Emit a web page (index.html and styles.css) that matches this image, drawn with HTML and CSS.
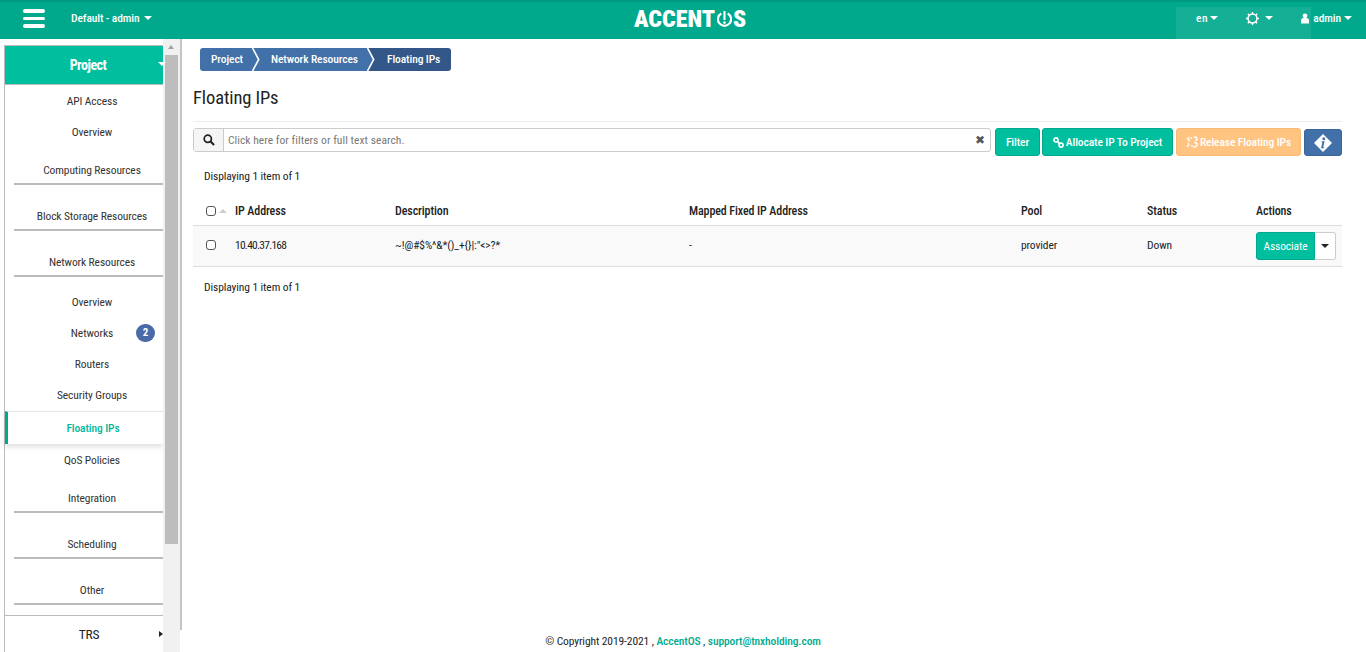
FILE: index.html
```html
<!DOCTYPE html>
<html lang="en">
<head>
<meta charset="utf-8">
<title>Floating IPs</title>
<link rel="stylesheet" href="styles.css">
</head>
<body>
<header class="topbar">
  <div class="hamburger"><span></span><span></span><span></span></div>
  <div class="project-switch">Default - admin<i class="caret"></i></div>
  <div class="logo">ACCENT<svg class="logo-o" viewBox="0 0 16 18" width="15" height="17"><path d="M4.6 2.6A7 7 0 1 0 11.4 2.6" fill="none" stroke="#fff" stroke-width="2.3"/><rect x="6.9" y="0" width="2.2" height="9.5" fill="#fff"/><circle cx="8" cy="12.3" r="1.4" fill="#fff"/></svg>S</div>
  <div class="patch"></div>
  <nav class="topnav">
    <div class="lang">en<i class="caret"></i></div>
    <div class="theme">
      <svg viewBox="0 0 14 14" width="13" height="13"><circle cx="7" cy="7" r="4.8" fill="none" stroke="#fff" stroke-width="1.6"/><path d="M7 0v2.4M7 11.6V14M0 7h2.4M11.6 7H14M2 2l1.7 1.7M10.3 10.3L12 12M12 2l-1.7 1.7M3.7 10.3L2 12" stroke="#fff" stroke-width="1.5"/></svg>
      <i class="caret"></i>
    </div>
    <div class="user">
      <svg viewBox="0 0 9 12" width="8" height="11"><circle cx="4.5" cy="3" r="2.7" fill="#fff"/><path d="M0 11.5V8.2C0 6.6 1.2 5.6 2.4 5.4h4.2C7.8 5.6 9 6.6 9 8.2v3.3z" fill="#fff"/></svg>
      <span>admin</span><i class="caret"></i>
    </div>
  </nav>
</header>
<div class="layout">
  <aside class="sidebar">
    <div class="panel">
      <div class="panel-head">Project<i class="caret head-caret"></i></div>
      <ul class="menu">
        <li class="item item-api">API Access</li>
        <li class="item item-short">Overview</li>
        <li class="group group-first">Computing Resources</li>
        <li class="group">Block Storage Resources</li>
        <li class="group">Network Resources</li>
        <li class="item item-sub">Overview</li>
        <li class="item item-short item-badge">Networks<span class="badge">2</span></li>
        <li class="item item-short">Routers</li>
        <li class="item item-short">Security Groups</li>
        <li class="item active">Floating IPs</li>
        <li class="item item-api">QoS Policies</li>
        <li class="group group-first">Integration</li>
        <li class="group">Scheduling</li>
        <li class="group">Other</li>
      </ul>
      <div class="panel-foot">TRS<i class="foot-caret"></i></div>
    </div>
    <div class="scrollbar">
      <i class="scroll-up"></i>
      <div class="thumb"></div>
    </div>
    <div class="rail"></div>
  </aside>
  <main class="content">
    <ol class="crumbs">
      <li class="crumb">Project</li>
      <li class="sep"><svg viewBox="0 0 8 23" width="8" height="23"><path d="M0 0h1l6 11.5L1 23H0z" fill="#4270a8"/><path d="M0.5 0l6.2 11.5L0.5 23" fill="none" stroke="#fff" stroke-width="1.6"/></svg></li>
      <li class="crumb crumb-mid">Network Resources</li>
      <li class="sep sep-dark"><svg viewBox="0 0 8 23" width="8" height="23"><path d="M0 0h1l6 11.5L1 23H0z" fill="#4270a8"/><path d="M0.5 0l6.2 11.5L0.5 23" fill="none" stroke="#fff" stroke-width="1.6"/></svg></li>
      <li class="crumb crumb-last">Floating IPs</li>
    </ol>
    <h1 class="title">Floating IPs</h1>
    <div class="toolbar">
      <div class="search">
        <span class="search-addon"><svg viewBox="0 0 13 13" width="12" height="12"><circle cx="5.2" cy="5.2" r="3.9" fill="none" stroke="#222" stroke-width="1.9"/><path d="M8.2 8.2l3.8 3.8" stroke="#222" stroke-width="2.2"/></svg></span>
        <span class="search-input">Click here for filters or full text search.</span>
        <span class="search-clear">✖</span>
      </div>
      <button class="btn btn-green btn-filter">Filter</button>
      <button class="btn btn-green btn-alloc"><svg viewBox="0 0 12 12" width="11" height="11"><circle cx="3.2" cy="3.2" r="2.2" fill="none" stroke="#fff" stroke-width="1.8"/><circle cx="8.8" cy="8.8" r="2.2" fill="none" stroke="#fff" stroke-width="1.8"/><path d="M4.8 4.8l2.4 2.4" stroke="#fff" stroke-width="1.8"/></svg>Allocate IP To Project</button>
      <button class="btn btn-orange"><svg viewBox="0 0 14 13" width="12" height="12"><path d="M1 3.5L3.5 1M4.5 3.5l-2 2.5M2 8l2 2.5M1 10.5l2 1.5M9 1h3l1 2.5-2 2M9.5 7l3 1 .5 2.5-2 1.5H8.5M6 1v2M7 10v2" fill="none" stroke="#fff" stroke-width="1.6"/></svg>Release Floating IPs</button>
      <button class="btn btn-info"><svg viewBox="0 0 20 20" width="20" height="20"><path d="M10 1l9 9-9 9-9-9z" fill="#fff"/><circle cx="10.8" cy="5.7" r="1.5" fill="#4270a8"/><path d="M8.6 8.2h3l-1.4 6h1v1H8l1.4-6h-1z" fill="#4270a8"/></svg></button>
    </div>
    <p class="count count-top">Displaying 1 item of 1</p>
    <div class="table">
      <div class="row row-head">
        <span class="cell-check"><i class="check"></i><i class="sort"></i></span>
        <span>IP Address</span><span>Description</span><span>Mapped Fixed IP Address</span><span>Pool</span><span>Status</span><span>Actions</span>
      </div>
      <div class="row row-body">
        <span class="cell-check"><i class="check"></i></span>
        <span class="ip">10.40.37.168</span><span>~!@#$%^&amp;*()_+{}|:"&lt;&gt;?*</span><span>-</span><span>provider</span><span>Down</span>
        <span class="actions"><button class="btn-assoc">Associate</button><button class="btn-more"><i class="caret caret-dark"></i></button></span>
      </div>
    </div>
    <p class="count count-bottom">Displaying 1 item of 1</p>
    <footer class="footer">© Copyright 2019-2021 , <a>AccentOS</a> , <a>support@tnxholding.com</a></footer>
  </main>
</div>
</body>
</html>
```
FILE: styles.css
```css
* { box-sizing: border-box; }
html, body { margin: 0; height: 652px; overflow: hidden; background: #fff; }
body { font-family: "Roboto", sans-serif; font-stretch: 75%; font-size: 11.5px; letter-spacing: -.1px; color: #222; white-space: nowrap; }
ul, ol { list-style: none; margin: 0; padding: 0; }
i { display: block; font-style: normal; }

.caret { width: 0; height: 0; border-left: 4px solid transparent; border-right: 4px solid transparent; border-top: 4px solid #fff; }
.caret-dark { border-top-color: #222; }

.topbar { position: relative; display: flex; align-items: center; height: 39px; background: #00a98c; border-top: 2px solid #009a80; color: #fff; }
.hamburger { display: flex; flex-direction: column; gap: 4px; width: 22px; margin: -4px 0 0 23px; }
.hamburger span { display: block; height: 3.5px; background: #fff; border-radius: 2px; }
.project-switch { display: flex; align-items: center; gap: 4px; margin: -5px 0 0 26px; font-weight: 500; }
.logo { position: absolute; left: 634px; top: 8px; display: flex; align-items: center; height: 18px; font-weight: 900; font-size: 24px; letter-spacing: 0; line-height: 18px; color: #fff; }
.logo-o { margin: 0 1px 0 2px; }
.patch { position: absolute; left: 1176px; top: 5px; width: 135px; height: 32px; background: rgba(255,255,255,.08); }
.topnav { position: relative; display: flex; align-items: center; margin: -5px 14px 0 auto; font-weight: 500; }
.lang, .theme, .user { display: flex; align-items: center; }
.lang { gap: 2px; letter-spacing: .6px; }
.theme { gap: 6px; margin-left: 28px; }
.user { margin-left: 28px; gap: 4px; }
.user .caret { margin-left: -1px; }

.layout { display: flex; height: 613px; }
.sidebar { display: flex; flex: none; width: 178px; margin-left: 4px; }
.panel { display: flex; flex: none; flex-direction: column; width: 159px; height: 607px; margin-top: 6px; border-left: 1px solid #bbb; border-top: 1px solid #bbb; }
.panel-head { position: relative; display: flex; flex: none; align-items: center; justify-content: center; height: 39px; padding-left: 8px; padding-bottom: 1px; background: #00bf9f; border-bottom: 1px solid #bbb; color: #fff; font-size: 14px; letter-spacing: -.5px; font-weight: 700; }
.head-caret { position: absolute; right: -3px; top: 16px; z-index: 2; }
.menu { flex: none; }
.item { display: flex; align-items: center; justify-content: center; padding-left: 16px; color: #333; text-align: center; }
.item-api { height: 32px; }
.item-short { height: 31px; padding-bottom: 1px; }
.item-sub { height: 41px; padding-top: 9px; }
.item-badge { position: relative; }
.group { height: 46px; margin-left: 9px; padding-top: 18px; padding-left: 7px; line-height: 27px; border-bottom: 2px solid #bbb; text-align: center; color: #333; }
.group-first { height: 37px; padding-top: 9px; }
.badge { position: absolute; right: 8px; top: 6px; width: 19px; height: 18px; border-radius: 9px; background: #4a6aa8; color: #fff; font-size: 11px; font-weight: 700; line-height: 18px; text-align: center; }
.active { height: 33px; border-top: 1px solid #e4e4e4; border-left: 3px solid #00a98c; color: #00b89c; font-weight: 500; box-shadow: 0 3px 5px rgba(0,0,0,.12); padding-left: 15px; }
.panel-foot { position: relative; display: flex; flex: none; align-items: center; justify-content: center; height: 37px; margin-top: 10px; padding-left: 10px; border-top: 1px solid #bbb; font-size: 13.5px; letter-spacing: -.3px; }
.foot-caret { position: absolute; right: 0; top: 15px; width: 0; height: 0; border-top: 3.5px solid transparent; border-bottom: 3.5px solid transparent; border-left: 4px solid #222; }

.scrollbar { position: relative; flex: none; width: 17px; background: #f1f1f1; padding: 16px 2px 0; }
.scroll-up { position: absolute; left: 5px; top: 6px; width: 0; height: 0; border-left: 3.5px solid transparent; border-right: 3.5px solid transparent; border-bottom: 4px solid #a3a3a3; }
.thumb { width: 13px; height: 489px; background: #bdbdbd; }
.rail { flex: none; width: 2px; height: 591px; background: #c4c4c4; }

.content { position: relative; flex: 1; min-width: 0; padding: 9px 24px 0 11px; }
.crumbs { display: flex; height: 23px; margin-left: 7px; color: #fff; font-weight: 500; line-height: 23px; }
.crumb { padding: 0 0 0 11px; width: 52px; background: #4270a8; border-radius: 3px 0 0 3px; }
.crumb-mid { width: 107px; border-radius: 0; padding-left: 11px; }
.crumb-last { width: 76px; background: #34578a; border-radius: 0 3px 3px 0; padding-left: 12px; }
.sep { width: 8px; height: 23px; background: #4270a8; }
.sep svg { display: block; }
.sep-dark { background: #34578a; }
.title { margin: 16px 0 0; font-size: 18.5px; font-weight: 400; line-height: 22px; padding-bottom: 12px; border-bottom: 1px solid #eee; color: #222; }
.toolbar { display: flex; align-items: flex-start; margin-top: 6px; gap: 2px; }
.search { display: flex; width: 798px; height: 24px; margin-right: 2px; border: 1px solid #ccc; border-radius: 3px; background: #fff; align-items: center; }
.search-addon { display: flex; flex: none; align-items: center; justify-content: center; width: 30px; height: 22px; background: #f5f5f5; border-right: 1px solid #ccc; }
.search-input { flex: 1; padding-left: 4px; color: #777; letter-spacing: .05px; }
.search-clear { width: 21px; color: #555; font-size: 12px; text-align: center; }
.btn { display: flex; align-items: center; justify-content: center; height: 28px; margin: 0; padding: 0; border: 1px solid transparent; border-radius: 3px; color: #fff; font: inherit; letter-spacing: inherit; font-weight: 500; }
.btn svg { margin-right: 2px; }
.btn-green { background: #00bf9f; border-color: #00a98c; }
.btn-filter { width: 45px; }
.btn-alloc { width: 131px; }
.btn-orange { width: 125px; margin-left: 1px; background: #ffc481; border-color: #f7bb78; }
.btn-info { width: 38px; height: 27px; margin: 1px 0 0 1px; background: #4270a8; border-color: #3b659a; }
.btn-info svg { margin: 0; }
.count { margin: 0; padding-left: 11px; color: #222; line-height: 16px; }
.count-top { margin-top: 12px; }
.count-bottom { margin-top: 12px; }
.table { margin-top: 10px; width: 1149px; }
.row { display: grid; grid-template-columns: 42px 160px 294px 332px 126px 109px 1fr; align-items: center; }
.row-head { height: 32px; padding-top: 2px; border-bottom: 1px solid #ddd; font-size: 12px; font-weight: 500; }
.row-body { height: 41px; background: #f9f9f9; border-bottom: 1px solid #ddd; }
.row-body > span { margin-top: -2px; }
.row-body > .actions { margin-top: 0; }
.ip { letter-spacing: -.75px; }
.cell-check { display: flex; align-items: center; gap: 3px; padding-left: 13px; }
.check { width: 10px; height: 10px; border: 1px solid #555; border-radius: 3px; background: #fff; }
.sort { width: 0; height: 0; border-left: 4px solid transparent; border-right: 4px solid transparent; border-bottom: 4px solid #ccc; }
.actions { display: flex; align-items: center; }
.btn-assoc { width: 59px; height: 28px; padding: 0; border: 1px solid #00a98c; border-radius: 3px 0 0 3px; background: #00bf9f; color: #fff; font: inherit; letter-spacing: inherit; }
.btn-more { display: flex; align-items: center; justify-content: center; width: 21px; height: 28px; padding: 0; border: 1px solid #ccc; border-left: 0; border-radius: 0 3px 3px 0; background: #fff; }
.footer { position: absolute; left: -182px; right: 0; top: 594px; text-align: center; line-height: 16px; color: #222; }
.footer a { color: #00a98c; font-weight: 500; }
```
